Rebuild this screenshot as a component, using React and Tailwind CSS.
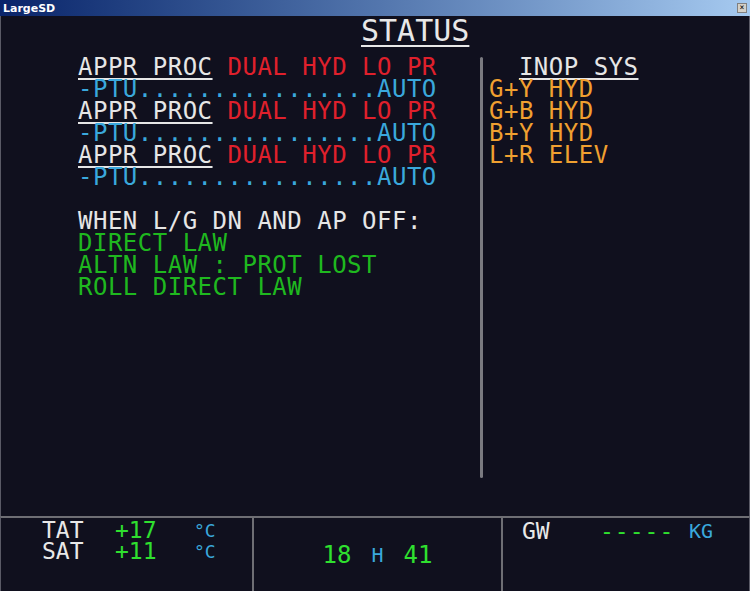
import React from 'react';

const mono = { fontFamily: '"DejaVu Sans Mono", "Liberation Mono", monospace' };

const Row = ({ children, className = '' }) => (
  <div className={`h-[22px] leading-[22px] whitespace-pre ${className}`}>{children}</div>
);

const ApprProc = () => (
  <>
    <Row>
      <span className="text-[#e6e6e6] underline decoration-2 underline-offset-[3px]">APPR PROC</span>
      <span className="text-[#e0202c]"> DUAL HYD LO PR</span>
    </Row>
    <Row className="text-[#3aa8dc]">-PTU................AUTO</Row>
  </>
);

export default function App() {
  return (
    <div className="w-[750px] h-[591px] flex flex-col bg-[#10101e] overflow-hidden" style={mono}>
      {/* window title bar */}
      <div className="h-[16px] flex items-center justify-between px-[3px] bg-gradient-to-r from-[#0a246a] to-[#a6caf0]">
        <span className="text-[11px] font-bold text-white leading-none" style={{ fontFamily: '"DejaVu Sans", sans-serif' }}>
          LargeSD
        </span>
        <span className="w-[10px] h-[10px] flex items-center justify-center bg-[#d4d0c8] border border-[#808080] text-[8px] leading-none text-black">
          ×
        </span>
      </div>

      <div className="flex-1 flex flex-col border-x border-[#5a5a66]">
        <div className="h-[30px] leading-[30px] pl-[360px] text-[30px] text-[#e8e8e8]">
          <span className="underline decoration-2 underline-offset-[4px]">STATUS</span>
        </div>

        <div className="flex flex-1 text-[24px] tracking-[0.5px]">
          <div className="w-[479px] pl-[77px] pt-[10px]">
            <ApprProc />
            <ApprProc />
            <ApprProc />
            <Row> </Row>
            <Row className="text-[#e6e6e6]">WHEN L/G DN AND AP OFF:</Row>
            <Row className="text-[#1fb81f]">DIRECT LAW</Row>
            <Row className="text-[#1fb81f]">ALTN LAW : PROT LOST</Row>
            <Row className="text-[#1fb81f]">ROLL DIRECT LAW</Row>
          </div>

          <div className="w-[3px] mt-[11px] mb-[38px] rounded-full bg-[#7a7a80]" />

          <div className="flex-1 pl-[6px] pt-[10px] text-[#f0a030]">
            <Row className="text-[#e6e6e6]">
              {'  '}
              <span className="underline decoration-2 underline-offset-[3px]">INOP SYS</span>
            </Row>
            <Row>G+Y HYD</Row>
            <Row>G+B HYD</Row>
            <Row>B+Y HYD</Row>
            <Row>L+R ELEV</Row>
          </div>
        </div>
      </div>

      {/* bottom memo strip */}
      <div className="h-[75px] border-t-2 border-[#6e6e74] grid grid-cols-[251px_2px_247px_2px_1fr] border-x border-x-[#5a5a66]">
        <div className="pt-[2px] pl-[41px] text-[23px] leading-[21px]">
          <div className="flex">
            <span className="w-[73px] text-[#e8e8e8]">TAT</span>
            <span className="w-[79px] text-[#2fe02f]">+17</span>
            <span className="text-[18px] text-[#3aa8dc]">°C</span>
          </div>
          <div className="flex">
            <span className="w-[73px] text-[#e8e8e8]">SAT</span>
            <span className="w-[79px] text-[#2fe02f]">+11</span>
            <span className="text-[18px] text-[#3aa8dc]">°C</span>
          </div>
        </div>
        <div className="bg-[#6e6e74]" />
        <div className="flex items-center justify-center text-[24px] gap-[20px]">
          <span className="text-[#2fe02f]">18</span>
          <span className="text-[20px] text-[#3aa8dc]">H</span>
          <span className="text-[#2fe02f]">41</span>
        </div>
        <div className="bg-[#6e6e74]" />
        <div className="flex pt-[3px] pl-[19px] text-[23px] leading-[21px]">
          <span className="w-[78px] text-[#e8e8e8]">GW</span>
          <span className="w-[89px] text-[#2fe02f] tracking-[1px]">-----</span>
          <span className="text-[20px] text-[#3aa8dc]">KG</span>
        </div>
      </div>
    </div>
  );
}
